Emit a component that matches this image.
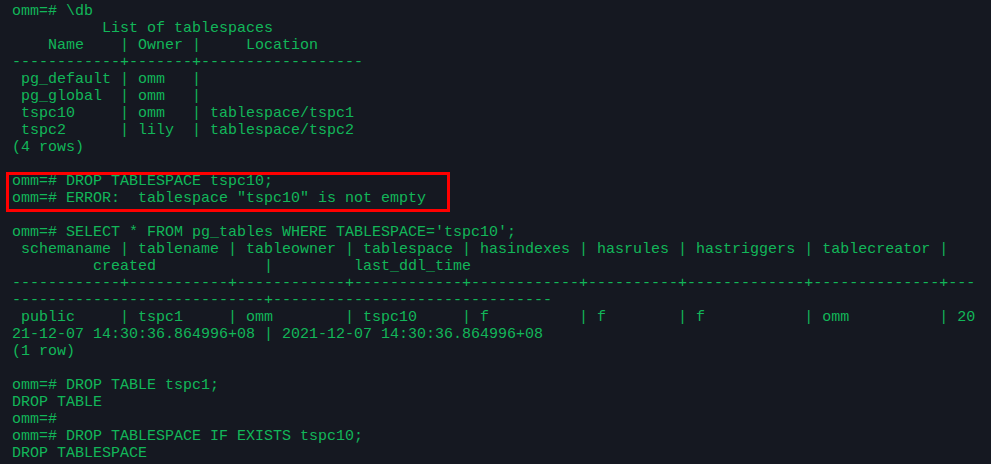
import React from 'react';

const before = [
  'omm=# \\db',
  '          List of tablespaces',
  '    Name    | Owner |     Location',
  '------------+-------+------------------',
  ' pg_default | omm   |',
  ' pg_global  | omm   |',
  ' tspc10     | omm   | tablespace/tspc1',
  ' tspc2      | lily  | tablespace/tspc2',
  '(4 rows)',
  '',
];

const boxed = [
  'omm=# DROP TABLESPACE tspc10;',
  'omm=# ERROR:  tablespace "tspc10" is not empty',
];

const after = [
  '',
  "omm=# SELECT * FROM pg_tables WHERE TABLESPACE='tspc10';",
  ' schemaname | tablename | tableowner | tablespace | hasindexes | hasrules | hastriggers | tablecreator |',
  '         created            |         last_ddl_time',
  '------------+-----------+------------+------------+------------+----------+-------------+--------------+---',
  '----------------------------+-------------------------------',
  ' public     | tspc1     | omm        | tspc10     | f          | f        | f           | omm          | 20',
  '21-12-07 14:30:36.864996+08 | 2021-12-07 14:30:36.864996+08',
  '(1 row)',
  '',
  'omm=# DROP TABLE tspc1;',
  'DROP TABLE',
  'omm=#',
  'omm=# DROP TABLESPACE IF EXISTS tspc10;',
  'DROP TABLESPACE',
];

const Line: React.FC<{ text: string }> = ({ text }) => (
  <div className="h-[17px] whitespace-pre">{text}</div>
);

const App: React.FC = () => {
  return (
    <div className="w-[991px] h-[464px] overflow-hidden bg-[#151821] text-[#12b659] font-['Liberation_Mono',monospace] text-[15px] leading-[17px] pl-[12px] pt-[3px]">
      {before.map((l, i) => (
        <Line key={'b' + i} text={l} />
      ))}
      <div className="relative">
        {/* red highlight around the failed drop */}
        <div className="absolute -left-[6px] -top-[1.5px] w-[444px] h-[40px] border-[3px] border-[#ff0000]" />
        {boxed.map((l, i) => (
          <Line key={'x' + i} text={l} />
        ))}
      </div>
      {after.map((l, i) => (
        <Line key={'a' + i} text={l} />
      ))}
    </div>
  );
};

export default App;
